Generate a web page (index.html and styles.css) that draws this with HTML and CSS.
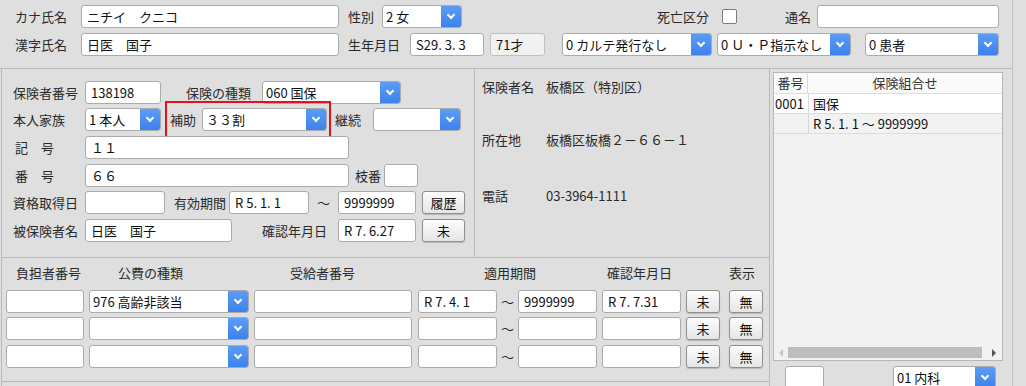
FILE: index.html
```html
<!DOCTYPE html>
<html>
<head>
    <meta charset="UTF-8" />
    <title>患者登録</title>
    <link rel="stylesheet" href="styles.css">
</head>
<body>
<div class="screen">
    <div class="top">
        <div class="row">
            <span class="lbl kname">カナ氏名</span>
            <span class="fld name">ニチイ　クニコ</span>
            <span class="lbl sex">性別</span>
            <span class="sel sexsel"><span class="v">2 女</span><span class="arw"></span></span>
            <span class="lbl dead">死亡区分</span>
            <span class="chk"></span>
            <span class="lbl alias">通名</span>
            <span class="fld aliasf"></span>
        </div>
        <div class="row">
            <span class="lbl kname">漢字氏名</span>
            <span class="fld name">日医　国子</span>
            <span class="lbl birth">生年月日</span>
            <span class="fld birthf">S29. 3. 3</span>
            <span class="fld ro age">71才</span>
            <span class="sel karte"><span class="v">0 カルテ発行なし</span><span class="arw"></span></span>
            <span class="sel up"><span class="v">0 Ｕ・Ｐ指示なし</span><span class="arw"></span></span>
            <span class="sel kind"><span class="v">0 患者</span><span class="arw"></span></span>
        </div>
    </div>

    <div class="main">
        <div class="leftcol">
            <div class="upper">
                <div class="ins">
                    <div class="row">
                        <span class="lbl ilbl">保険者番号</span>
                        <span class="fld w76">138198</span>
                        <span class="lbl ltype">保険の種類</span>
                        <span class="sel w139"><span class="v">060 国保</span><span class="arw"></span></span>
                    </div>
                    <div class="row up1">
                        <span class="lbl ilbl">本人家族</span>
                        <span class="sel w76"><span class="v">1 本人</span><span class="arw"></span></span>
                        <span class="hl">
                            <span class="lbl lhojo">補助</span>
                            <span class="sel w125"><span class="v">３３割</span><span class="arw"></span></span>
                        </span>
                        <span class="lbl lkeizoku">継続</span>
                        <span class="sel w88"><span class="v"></span><span class="arw"></span></span>
                    </div>
                    <div class="row">
                        <span class="lbl ilbl sp">記　号</span>
                        <span class="fld w264">１１</span>
                    </div>
                    <div class="row">
                        <span class="lbl ilbl sp">番　号</span>
                        <span class="fld w264">６６</span>
                        <span class="lbl ledaban">枝番</span>
                        <span class="fld w34"></span>
                    </div>
                    <div class="row up1">
                        <span class="lbl ilbl">資格取得日</span>
                        <span class="fld w80"></span>
                        <span class="lbl lkikan">有効期間</span>
                        <span class="fld w80">R 5. 1. 1</span>
                        <span class="tilde">〜</span>
                        <span class="fld w78">9999999</span>
                        <span class="btn w43">履歴</span>
                    </div>
                    <div class="row">
                        <span class="lbl ilbl">被保険者名</span>
                        <span class="fld w147">日医　国子</span>
                        <span class="lbl lkakunin">確認年月日</span>
                        <span class="fld w78">R 7. 6.27</span>
                        <span class="btn w43">未</span>
                    </div>
                </div>
                <div class="info">
                    <div class="irow"><span class="ik">保険者名</span><span>板橋区（特別区）</span></div>
                    <div class="irow r2"><span class="ik">所在地</span><span>板橋区板橋２－６６－１</span></div>
                    <div class="irow r3"><span class="ik">電話</span><span>03-3964-1111</span></div>
                </div>
            </div>

            <div class="kohi">
                <div class="khead">
                    <span class="kh1">負担者番号</span>
                    <span class="kh2">公費の種類</span>
                    <span class="kh3">受給者番号</span>
                    <span class="kh4">適用期間</span>
                    <span class="kh5">確認年月日</span>
                    <span>表示</span>
                </div>
                <div class="krows">
                    <div class="row">
                        <span class="fld w78"></span>
                        <span class="sel w160 g5"><span class="v">976 高齢非該当</span><span class="arw"></span></span>
                        <span class="fld w158 g5"></span>
                        <span class="fld w79 g6">R 7. 4. 1</span>
                        <span class="tilde kt">〜</span>
                        <span class="fld w79">9999999</span>
                        <span class="fld w79 g5">R 7. 7.31</span>
                        <span class="btn w34 g5">未</span>
                        <span class="btn w34 g9">無</span>
                    </div>
                    <div class="row">
                        <span class="fld w78"></span>
                        <span class="sel w160 g5"><span class="v"></span><span class="arw"></span></span>
                        <span class="fld w158 g5"></span>
                        <span class="fld w79 g6"></span>
                        <span class="tilde kt">〜</span>
                        <span class="fld w79"></span>
                        <span class="fld w79 g5"></span>
                        <span class="btn w34 g5">未</span>
                        <span class="btn w34 g9">無</span>
                    </div>
                    <div class="row last">
                        <span class="fld w78"></span>
                        <span class="sel w160 g5"><span class="v"></span><span class="arw"></span></span>
                        <span class="fld w158 g5"></span>
                        <span class="fld w79 g6"></span>
                        <span class="tilde kt">〜</span>
                        <span class="fld w79"></span>
                        <span class="fld w79 g5"></span>
                        <span class="btn w34 g5">未</span>
                        <span class="btn w34 g9">無</span>
                    </div>
                </div>
            </div>
        </div>

        <div class="rightcol">
            <div class="frame">
                <div class="trow thead">
                    <span class="c1">番号</span>
                    <span class="c2 center">保険組合せ</span>
                </div>
                <div class="trow white">
                    <span class="c1">0001</span>
                    <span class="c2">国保</span>
                </div>
                <div class="trow">
                    <span class="c1"></span>
                    <span class="c2">R 5. 1. 1 〜 9999999</span>
                </div>
                <div class="tbody"></div>
                <div class="hscroll">
                    <span class="larr"></span>
                    <span class="thumb"></span>
                    <span class="rarr"></span>
                </div>
            </div>
            <div class="rfoot">
                <span class="fld w39"></span>
                <span class="sel w103 dept"><span class="v">01 内科</span><span class="arw"></span></span>
            </div>
        </div>
    </div>
</div>
</body>
</html>
```

FILE: styles.css
```css
body {
    margin: 0;
    background: #dfdfdf;
    font-family: "Noto Sans CJK JP", "Noto Sans", sans-serif;
    font-size: 13px;
    color: #2a2a2a;
}
.screen {
    width: 1012px;
    height: 386px;
    border-right: 1px solid #c2c2c2;
    overflow: hidden;
}
.top {
    height: 63px;
    padding: 5px 0 0 15px;
    border-bottom: 1px solid #bababa;
    display: flex;
    flex-direction: column;
    gap: 5px;
}
.row {
    display: flex;
    align-items: center;
    height: 23px;
}
.lbl {
    white-space: nowrap;
    line-height: 23px;
}

/* form parts */
.fld {
    box-sizing: border-box;
    height: 23px;
    background: #fff;
    border: 1px solid #ababab;
    border-radius: 3px;
    padding: 0 5px;
    line-height: 21px;
    white-space: pre;
    overflow: hidden;
    color: #111;
}
.fld.ro {
    background: #f1f1f1;
    border-color: #c0c0c0;
}
.sel {
    box-sizing: border-box;
    height: 23px;
    display: flex;
    background: #fff;
    border: 1px solid #ababab;
    border-radius: 3px;
    overflow: hidden;
    color: #111;
}
.sel .v {
    flex: 1;
    padding-left: 3px;
    line-height: 21px;
    white-space: pre;
    overflow: hidden;
}
.arw {
    width: 20px;
    background: linear-gradient(#5a9df6, #3d82ec);
    display: flex;
    align-items: center;
    justify-content: center;
}
.arw::after {
    content: "";
    width: 4px;
    height: 4px;
    border-right: 2px solid #fff;
    border-bottom: 2px solid #fff;
    transform: translateY(-2px) rotate(45deg);
}
.btn {
    box-sizing: border-box;
    height: 23px;
    border: 1px solid #8f8f8f;
    border-radius: 3px;
    background: linear-gradient(#fcfcfc, #e6e6e6);
    box-shadow: 0 1px 1px rgba(0,0,0,0.18);
    text-align: center;
    line-height: 21px;
    color: #111;
}
.chk {
    box-sizing: border-box;
    width: 15px;
    height: 15px;
    border: 1px solid #7c7c7c;
    border-radius: 2px;
    background: #fff;
    margin-left: 13px;
}
.tilde {
    width: 29px;
    text-align: center;
    line-height: 23px;
}

/* top rows */
.kname { width: 66px; }
.name { width: 258px; }
.sex { width: 34px; margin-left: 9px; }
.sexsel { width: 80px; }
.dead { width: 52px; margin-left: 195px; }
.alias { width: 26px; margin-left: 48px; }
.aliasf { width: 182px; margin-left: 6px; }
.birth { width: 62px; margin-left: 9px; }
.birthf { width: 74px; }
.age { width: 55px; margin-left: 6px; }
.karte { width: 150px; margin-left: 17px; }
.up { width: 134px; margin-left: 5px; }
.kind { width: 134px; margin-left: 14px; }

/* main area */
.main {
    display: flex;
    height: 317px;
}
.leftcol {
    margin-left: 1px;
    width: 767px;
    border-left: 1px solid #bababa;
    border-right: 1px solid #bababa;
}
.upper {
    display: flex;
    height: 188px;
    border-bottom: 1px solid #bababa;
}
.ins {
    box-sizing: border-box;
    width: 473px;
    border-right: 1px solid #bababa;
    padding: 12px 0 0 11px;
    display: flex;
    flex-direction: column;
    gap: 5px;
}
.up1 { margin-top: -1px; }
.ilbl { width: 72px; }
.ilbl.sp { width: 70px; padding-left: 2px; }
.ltype { width: 76px; margin-left: 25px; }
.lhojo { width: 32px; }
.lkeizoku { width: 38px; margin-left: 4px; }
.ledaban { width: 29px; margin-left: 6px; }
.lkikan { width: 55px; margin-left: 9px; }
.lkakunin { width: 76px; margin-left: 30px; }
.hl {
    display: flex;
    align-items: center;
    margin: -7px 0 -7px 4px;
    padding: 5px 2px 5px 3px;
    border: 2px solid #e3121c;
}
.w34 { width: 34px; }
.w39 { width: 39px; }
.w43 { width: 43px; margin-left: 6px; }
.w76 { width: 76px; }
.w78 { width: 78px; }
.w79 { width: 79px; }
.w80 { width: 80px; }
.w88 { width: 88px; }
.w103 { width: 103px; }
.w125 { width: 125px; }
.w139 { width: 139px; }
.w147 { width: 147px; }
.w158 { width: 158px; }
.w160 { width: 160px; }
.w264 { width: 264px; }
.g5 { margin-left: 5px; }
.g6 { margin-left: 6px; }
.g9 { margin-left: 9px; }

.info {
    flex: 1;
    padding: 9px 0 0 7px;
}
.irow {
    display: flex;
    line-height: 18px;
}
.ik { width: 64px; }
.irow.r2 { margin-top: 35px; }
.irow.r3 { margin-top: 38px; }

/* kohi */
.kohi {
    box-sizing: border-box;
    height: 124px;
    border-bottom: 1px solid #bababa;
    padding: 6px 0 0 4px;
}
.khead {
    display: flex;
    height: 18px;
    line-height: 18px;
    margin-bottom: 8px;
    white-space: nowrap;
}
.kh1 { width: 102px; padding-left: 10px; }
.kh2 { width: 172px; }
.kh3 { width: 194px; }
.kh4 { width: 123px; }
.kh5 { width: 122px; }
.krows {
    display: flex;
    flex-direction: column;
    gap: 4px;
}
.krows .last { margin-top: 1px; }
.tilde.kt { width: 21px; }

/* right column */
.rightcol {
    box-sizing: border-box;
    width: 235px;
    padding: 3px 0 0 3px;
}
.frame {
    box-sizing: border-box;
    width: 230px;
    height: 289px;
    border: 1px solid #b7b7b7;
    background: #f2f2f2;
    display: flex;
    flex-direction: column;
}
.trow {
    display: flex;
    height: 19px;
    line-height: 19px;
    border-bottom: 1px solid #dddddd;
    color: #111;
}
.thead {
    height: 20px;
    line-height: 20px;
    background: #fafafa;
    color: #333;
}
.trow.white { background: #fff; }
.c1 {
    width: 33px;
    border-right: 1px solid #d8d8d8;
    padding-left: 1px;
}
.thead .c1 { text-align: center; padding-left: 0; }
.c2 {
    flex: 1;
    padding-left: 4px;
    white-space: pre;
}
.c2.center { text-align: center; padding-left: 0; }
.tbody { flex: 1; }
.hscroll {
    display: flex;
    align-items: center;
    height: 11px;
    margin-bottom: 2px;
    padding: 0 6px 0 5px;
}
.larr {
    width: 0;
    height: 0;
    border-top: 4px solid transparent;
    border-bottom: 4px solid transparent;
    border-right: 4px solid #c6c6c6;
}
.thumb {
    flex: 1;
    height: 11px;
    margin: 0 10px 0 5px;
    background: #bdbdbd;
}
.rarr {
    width: 0;
    height: 0;
    border-top: 4px solid transparent;
    border-bottom: 4px solid transparent;
    border-left: 4px solid #555;
}
.rfoot {
    display: flex;
    margin-top: 5px;
}
.rfoot .w39 { margin-left: 12px; }
.dept { margin-left: 69px; }
```
